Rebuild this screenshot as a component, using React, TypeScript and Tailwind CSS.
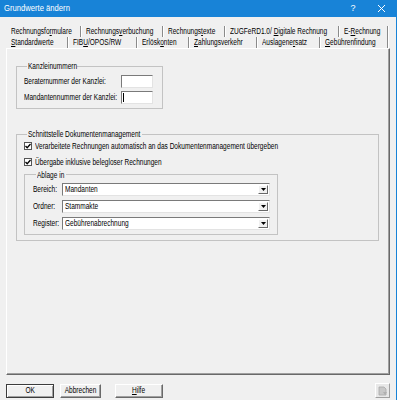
import React from "react";

const U = ({ children }: { children: React.ReactNode }) => <span className="underline underline-offset-[1px]">{children}</span>;

const T = ({ children, center }: { children: React.ReactNode; center?: boolean }) => (
  <span className={"inline-block whitespace-nowrap scale-x-[0.77] " + (center ? "origin-center" : "origin-left")}>{children}</span>
);

function Tab({ w, children }: { w: number; children: React.ReactNode }) {
  return (
    <div style={{ width: w }} className="h-full flex items-center pl-[5px] border-r border-[#8a8a8a] shadow-[1px_0_0_#ffffff] overflow-visible shrink-0">
      <T>{children}</T>
    </div>
  );
}

function Select({ value }: { value: string }) {
  return (
    <div className="w-[208px] h-[13px] bg-white border border-t-[#7a7a7a] border-l-[#7a7a7a] border-r-[#e3e3e3] border-b-[#e3e3e3] flex items-center overflow-hidden">
      <span className="flex-1 pl-[2px]"><T>{value}</T></span>
      <div className="w-[10px] h-[9px] mr-[1px] bg-[#f0f0f0] border border-t-white border-l-white border-r-[#696969] border-b-[#696969] flex items-center justify-center shrink-0">
        <svg width="5" height="3" viewBox="0 0 5 3"><path d="M0 0H5L2.5 3Z" fill="#000" /></svg>
      </div>
    </div>
  );
}

function Check({ children, className }: { children: React.ReactNode; className?: string }) {
  return (
    <div className={"flex items-center h-[9px] " + (className ?? "")}>
      <div className="w-[8px] h-[8px] bg-white border border-[#555] flex items-center justify-center shrink-0">
        <svg width="6" height="6" viewBox="0 0 6 6"><path d="M0.5 3L2.2 4.8L5.5 1" stroke="#000" strokeWidth="1.3" fill="none" /></svg>
      </div>
      <span className="ml-[3px]"><T>{children}</T></span>
    </div>
  );
}

function Btn({ w, children, def }: { w: number; children: React.ReactNode; def?: boolean }) {
  return (
    <div
      style={{ width: w }}
      className={
        "h-[14px] flex items-center justify-center bg-[#f0f0f0] overflow-hidden " +
        (def
          ? "border border-[#3c3c3c] shadow-[inset_1px_1px_0_#ffffff,inset_-1px_-1px_0_#a0a0a0]"
          : "border border-t-white border-l-white border-r-[#696969] border-b-[#696969] shadow-[inset_-1px_-1px_0_#a0a0a0]")
      }
    >
      <T center>{children}</T>
    </div>
  );
}

export default function App() {
  return (
    <div className="w-[397px] h-[400px] bg-[#f0f0f0] border-r border-[#1883d7] flex flex-col text-[8.5px] leading-none text-black font-['Liberation_Sans',Arial,sans-serif]">
      {/* title bar */}
      <div className="h-[17px] bg-[#1883d7] flex items-center text-white shrink-0">
        <span className="flex-1 pl-[4px] text-[9px]"><span className="inline-block origin-left scale-x-[0.85] whitespace-nowrap">Grundwerte ändern</span></span>
        <span className="w-[10px] text-center text-[9px]">?</span>
        <span className="w-[20px]" />
        <svg width="7" height="7" viewBox="0 0 7 7" className="mr-[11px]"><path d="M0 0L7 7M7 0L0 7" stroke="#fff" strokeWidth="1" /></svg>
      </div>

      <div className="flex-1 flex flex-col pt-[9px] pl-[6px] pr-[6px]">
        {/* tab rows */}
        <div className="h-[11px] flex">
          <Tab w={75}>Rechnungsfo<U>r</U>mulare</Tab>
          <Tab w={82}>Rechnungs<U>v</U>erbuchung</Tab>
          <Tab w={62}>Rechnungs<U>t</U>exte</Tab>
          <Tab w={114}>ZUGFeRD1.0/ <U>D</U>igitale Rechnung</Tab>
          <Tab w={49}>E-<U>R</U>echnung</Tab>
        </div>
        <div className="h-[11px] flex">
          <Tab w={62}><U>S</U>tandardwerte</Tab>
          <Tab w={69}>FIB<U>U</U>/OPOS/RW</Tab>
          <Tab w={52}>Erlösk<U>o</U>nten</Tab>
          <Tab w={68}><U>Z</U>ahlungsverkehr</Tab>
          <Tab w={63}>Auslagene<U>r</U>satz</Tab>
          <Tab w={68}><U>G</U>ebührenfindung</Tab>
        </div>

        {/* panel */}
        <div className="h-[327px] border-t border-l border-t-white border-l-white border-r border-b border-r-[#696969] border-b-[#696969] shadow-[inset_-1px_-1px_0_#a0a0a0] pl-[9px] pt-[13px] flex flex-col">
          <fieldset className="w-[147px] h-[47px] border border-[#c3c3c3] pl-[7px] pt-[4px]">
            <legend className="ml-[3px] px-[1px] w-[50px] overflow-visible"><T>Kanzleinummern</T></legend>
            <div className="flex items-center h-[13px]">
              <span className="w-[97px]"><T>Beraternummer der Kanzlei:</T></span>
              <div className="w-[32px] h-[13px] bg-white border border-t-[#7a7a7a] border-l-[#7a7a7a] border-r-[#e3e3e3] border-b-[#e3e3e3]" />
            </div>
            <div className="flex items-center h-[13px] mt-[3px]">
              <span className="w-[97px]"><T>Mandantennummer der Kanzlei:</T></span>
              <div className="w-[32px] h-[13px] bg-white border border-t-[#7a7a7a] border-l-[#7a7a7a] border-r-[#e3e3e3] border-b-[#e3e3e3] flex items-center pl-[1px]">
                <div className="w-[1px] h-[9px] bg-black" />
              </div>
            </div>
          </fieldset>

          <fieldset className="mt-[21px] w-[363px] h-[111px] border border-[#c3c3c3] pl-[7px] pt-[3px]">
            <legend className="ml-[3px] px-[1px] w-[115px] overflow-visible"><T>Schnittstelle Dokumentenmanagement</T></legend>
            <Check>Verarbeitete Rechnungen automatisch an das Dokumentenmanagement übergeben</Check>
            <Check className="mt-[7px]">Übergabe inklusive belegloser Rechnungen</Check>
            <fieldset className="mt-[4px] w-[254px] h-[64px] border border-[#c3c3c3] pl-[8px] pt-[4px]">
              <legend className="ml-[3px] px-[1px] w-[30px] overflow-visible"><T>Ablage in</T></legend>
              <div className="flex items-center">
                <span className="w-[29px]"><T>Bereich:</T></span>
                <Select value="Mandanten" />
              </div>
              <div className="flex items-center mt-[4px]">
                <span className="w-[29px]"><T>Ordner:</T></span>
                <Select value="Stammakte" />
              </div>
              <div className="flex items-center mt-[4px]">
                <span className="w-[29px]"><T>Register:</T></span>
                <Select value="Gebührenabrechnung" />
              </div>
            </fieldset>
          </fieldset>
        </div>

        {/* buttons */}
        <div className="mt-[8px] flex items-center">
          <Btn w={48} def>OK</Btn>
          <div className="w-[6px]" />
          <Btn w={41}>Abbrechen</Btn>
          <div className="w-[14px]" />
          <Btn w={48}><U>H</U>ilfe</Btn>
          <div className="flex-1" />
          <div className="w-[15px] h-[15px] bg-[#e8e8e8] border border-t-white border-l-white border-r-[#a0a0a0] border-b-[#a0a0a0] flex items-center justify-center">
            <svg width="10" height="10" viewBox="0 0 10 10">
              <path d="M1 1H6L8 3V9H1Z" fill="#c8c8c8" stroke="#a8a8a8" strokeWidth="0.8" />
              <path d="M5 6L9 6L7 9Z" fill="#b0b0b0" />
            </svg>
          </div>
        </div>
      </div>
    </div>
  );
}
